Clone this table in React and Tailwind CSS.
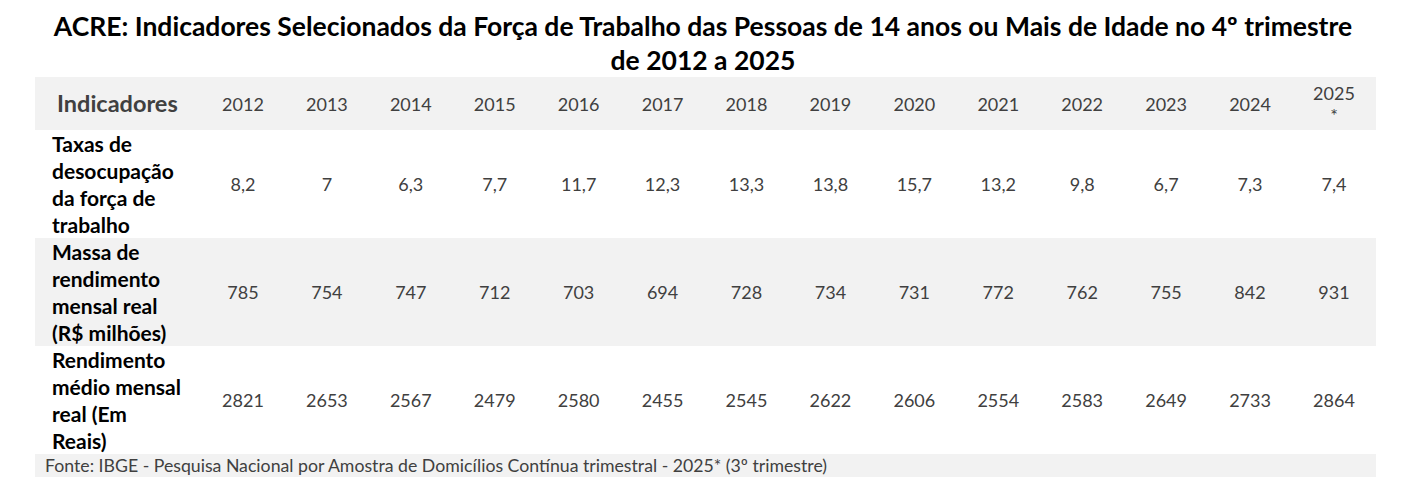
import React from 'react';

const years = ['2012', '2013', '2014', '2015', '2016', '2017', '2018', '2019', '2020', '2021', '2022', '2023', '2024'];

const rows = [
    {
        label: 'Taxas de desocupação da força de trabalho',
        values: ['8,2', '7', '6,3', '7,7', '11,7', '12,3', '13,3', '13,8', '15,7', '13,2', '9,8', '6,7', '7,3', '7,4'],
        shaded: false,
    },
    {
        label: 'Massa de rendimento mensal real (R$ milhões)',
        values: ['785', '754', '747', '712', '703', '694', '728', '734', '731', '772', '762', '755', '842', '931'],
        shaded: true,
    },
    {
        label: 'Rendimento médio mensal real (Em Reais)',
        values: ['2821', '2653', '2567', '2479', '2580', '2455', '2545', '2622', '2606', '2554', '2583', '2649', '2733', '2864'],
        shaded: false,
    },
];

const App = () => {
    return (
        <div className="w-[1406px] h-[500px] bg-white font-['Lato',sans-serif] text-[#404040]">
            {/* Title */}
            <h1 className="pt-[9px] px-[45px] text-center text-[26.5px] leading-[34px] font-bold text-black">
                ACRE: Indicadores Selecionados da Força de Trabalho das Pessoas de 14 anos ou Mais de Idade no 4º trimestre de 2012 a 2025
            </h1>

            {/* Table */}
            <div className="ml-[35px] w-[1341px]">
                <table className="w-full table-fixed border-collapse">
                    <colgroup>
                        <col className="w-[166px]" />
                        {Array.from({ length: 14 }).map((_, i) => (
                            <col key={i} />
                        ))}
                    </colgroup>
                    <thead>
                        <tr className="bg-[#f2f2f2] h-[53px]">
                            <th className="pl-[22px] text-left text-[23.5px] font-bold text-[#404040]">Indicadores</th>
                            {years.map((y) => (
                                <td key={y} className="text-center text-[18px] leading-[22px]">
                                    {y}
                                </td>
                            ))}
                            <td className="text-center text-[18px] leading-[22px]">
                                2025
                                <br />
                                *
                            </td>
                        </tr>
                    </thead>
                    <tbody>
                        {rows.map((row) => (
                            <tr key={row.label} className={`h-[108px] ${row.shaded ? 'bg-[#f2f2f2]' : 'bg-white'}`}>
                                <td className="pl-[17px] pr-[17px] text-[21px] leading-[27px] font-bold text-black">
                                    {row.label}
                                </td>
                                {row.values.map((v, i) => (
                                    <td key={i} className="text-center text-[18px]">
                                        {v}
                                    </td>
                                ))}
                            </tr>
                        ))}
                    </tbody>
                </table>
                <div className="bg-[#f2f2f2] h-[23px] pl-[10px] text-[17.7px] leading-[23px]">
                    Fonte: IBGE - Pesquisa Nacional por Amostra de Domicílios Contínua trimestral - 2025* (3º trimestre)
                </div>
            </div>
        </div>
    );
};

export default App;
